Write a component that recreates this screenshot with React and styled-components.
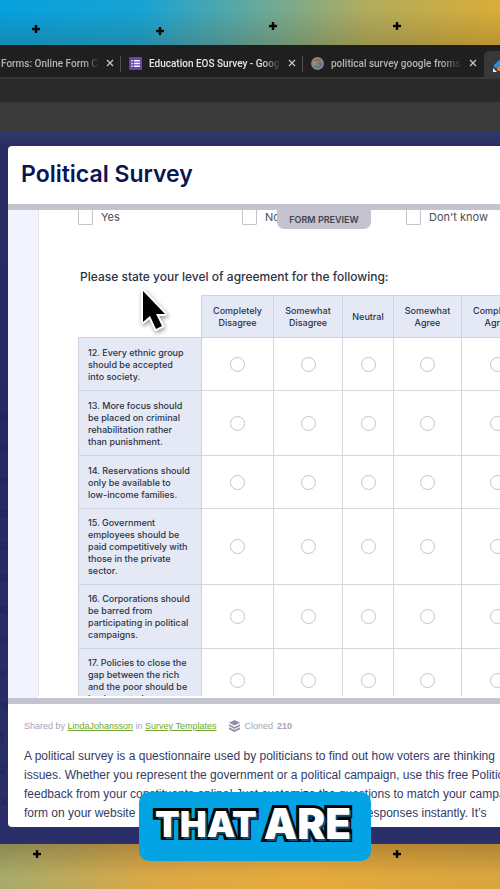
import React from 'react'
import styled, { createGlobalStyle } from 'styled-components';

const columns = ['Completely Disagree', 'Somewhat Disagree', 'Neutral', 'Somewhat Agree', 'Completely Agree'];

const questions = [
  '12. Every ethnic group should be accepted into society.',
  '13. More focus should be placed on criminal rehabilitation rather than punishment.',
  '14. Reservations should only be available to low-income families.',
  '15. Government employees should be paid competitively with those in the private sector.',
  '16. Corporations should be barred from participating in political campaigns.',
  '17. Policies to close the gap between the rich and the poor should be implemented.',
];

const counts = ['95', '74', '10', '02', '23', '02', '82', '50', '9', '14', '1', '2', '3', '29'];

function Plus({ x, y }) {
  return (
    <PlusMark $x={x} $y={y} viewBox="0 0 8 8">
      <path d="M4 0.8v6.4M0.8 4h6.4" stroke="#050505" strokeWidth="2.4" strokeLinecap="round" />
    </PlusMark>
  )
}

function CloseTab() {
  return (
    <CloseButton aria-label="Close tab">
      <svg width="8" height="8" viewBox="0 0 8 8"><path d="M1 1l6 6M7 1l-6 6" stroke="currentColor" strokeWidth="1.2" /></svg>
    </CloseButton>
  )
}

function BrowserTabs() {
  return (
    <TabBar>
      <Tab $width={121}>
        <TabTitle>Forms: Online Form Creator</TabTitle>
        <CloseTab />
      </Tab>
      <Tab $width={182} $bright>
        <svg width="13" height="13" viewBox="0 0 12 12">
          <rect width="12" height="12" rx="1" fill="#6a42b4" />
          <path d="M4.5 3.5H10M4.5 6H10M4.5 8.5H10" stroke="#fff" strokeWidth="1.3" />
          <path d="M2.2 3.5h1.2M2.2 6h1.2M2.2 8.5h1.2" stroke="#fff" strokeWidth="1.3" />
        </svg>
        <TabTitle>Education EOS Survey - Google Forms</TabTitle>
        <CloseTab />
      </Tab>
      <Tab $width={181} $last>
        <svg width="13" height="13" viewBox="0 0 13 13">
          <circle cx="6.5" cy="6.5" r="6.5" fill="#858588" />
          <g fill="none" strokeWidth="1.6">
            <path d="M9 4A3.6 3.6 0 0 0 3.4 4.7" stroke="#b5534d" />
            <path d="M3.4 4.7A3.6 3.6 0 0 0 3.4 8.3" stroke="#b3994e" />
            <path d="M3.4 8.3A3.6 3.6 0 0 0 8.8 9.3" stroke="#4c8a5c" />
            <path d="M8.8 9.3A3.6 3.6 0 0 0 10.1 6.6H6.7" stroke="#4e6fa6" />
          </g>
        </svg>
        <TabTitle>political survey google froms template</TabTitle>
        <CloseTab />
      </Tab>
      <ActiveTab>
        <svg width="16" height="14" viewBox="0 0 16 14">
          <path d="M3 6l4-4" stroke="#2f8ede" strokeWidth="4" strokeLinecap="round" />
          <path d="M6 9l5-5" stroke="#f07832" strokeWidth="4" strokeLinecap="round" />
          <path d="M11 11l3-3" stroke="#f5b52e" strokeWidth="4" strokeLinecap="round" />
          <path d="M0 8v4h4z" fill="#eee" />
        </svg>
      </ActiveTab>
    </TabBar>
  )
}

function SurveyForm() {
  return (
    <Preview>
      <Badge>FORM PREVIEW</Badge>
      <Sheet>
        <Options>
          {['Yes', 'No', "Don't know"].map((o) => (
            <Option key={o}><input type="checkbox" />{o}</Option>
          ))}
        </Options>
        <Question>Please state your level of agreement for the following:</Question>
        <Matrix>
          <colgroup>
            <Col $w={123} /><Col $w={72} /><Col $w={69} /><Col $w={51} /><Col $w={68} /><Col $w={72} />
          </colgroup>
          <thead>
            <tr>
              <td />
              {columns.map((c) => <th key={c} scope="col">{c}</th>)}
            </tr>
          </thead>
          <tbody>
            {questions.map((q, i) => (
              <tr key={q}>
                <th scope="row">{q}</th>
                {columns.map((c) => (
                  <td key={c}><Radio type="radio" name={`q${i}`} aria-label={c} /></td>
                ))}
              </tr>
            ))}
          </tbody>
        </Matrix>
      </Sheet>
    </Preview>
  )
}

function App() {
  return (
    <Page>
      <GlobalStyle />
      <Banner>
        <Plus x={36} y={29} />
        <Plus x={160} y={31} />
        <Plus x={273} y={26} />
        <Plus x={397} y={26} />
      </Banner>
      <BrowserTabs />
      <AddressBar />
      <BookmarkBar />
      <Site>
        <Sidebar>{counts.map((c, i) => <span key={i}>{c}</span>)}</Sidebar>
        <Modal>
          <Title>Political Survey</Title>
          <SurveyForm />
          <Details>
            <Meta>
              <span>Shared by <a href="#user">LindaJohansson</a> in <a href="#templates">Survey Templates</a></span>
              <Cloned>
                <svg width="11" height="12" viewBox="0 0 11 12">
                  <path d="M5.5 0L11 2.8 5.5 5.6 0 2.8z" fill="#8e91a6" />
                  <path d="M0 4.2l5.5 2.8L11 4.2v1.9L5.5 8.9 0 6.1z" fill="#8e91a6" />
                  <path d="M0 7.3l5.5 2.8L11 7.3v1.9L5.5 12 0 9.2z" fill="#8e91a6" />
                </svg>
                Cloned <b>210</b>
              </Cloned>
            </Meta>
            <Description>
              A political survey is a questionnaire used by politicians to find out how voters are thinking<br />
              issues. Whether you represent the government or a political campaign, use this free Political<br />
              feedback from your constituents online! Just customize the questions to match your campaign<br />
              form on your website or share it with your link and easily collect responses instantly. It’s<br />
              and highlight the issues that matter most to your constituents, all in one place
            </Description>
          </Details>
        </Modal>
      </Site>
      <Banner $bottom>
        <Plus x={37} y={10} />
        <Plus x={397} y={10} />
      </Banner>
      <Pointer viewBox="0 0 34 50">
        <path d="M5 7v31l7-6 6 13 6-3-6-12h9z" fill="#000" stroke="#fff" strokeWidth="4" strokeLinejoin="round" paintOrder="stroke" />
      </Pointer>
      <Caption><span>THAT</span><strong>ARE</strong></Caption>
    </Page>
  )
}

const GlobalStyle = createGlobalStyle`
*{
  box-sizing:border-box;
}
body{
  margin:0;
  font-family:Inter, "Liberation Sans", sans-serif;
}
`

const Page = styled.div`
  position:relative;
  display:flex;
  flex-direction:column;
  height:100vh;
  overflow:hidden;
`

const Banner = styled.div`
  position:relative;
  flex:none;
  height:45px;
  background:${(p) => p.$bottom
    ? 'linear-gradient(rgba(70,50,20,.28), transparent 70%), linear-gradient(90deg, #a5ab6c, #dba846 30%, #e6aa3c 60%, #d8a540)'
    : 'linear-gradient(transparent 20%, rgba(60,50,20,.2)), linear-gradient(98deg, #06a1de, #17a3d3 28%, #62a9a0 50%, #b2ac5c 73%, #dcad36)'};
`

const PlusMark = styled.svg`
  position:absolute;
  width:8px;
  height:8px;
  left:${(p) => p.$x - 4}px;
  top:${(p) => p.$y - 4}px;
`

const TabBar = styled.nav`
  display:flex;
  flex:none;
  height:34px;
  background:#1f1f1f;
  border-bottom:2px solid #383838;
  overflow:hidden;
`

const Tab = styled.div`
  display:flex;
  align-items:center;
  flex:none;
  gap:7px;
  width:${(p) => p.$width}px;
  padding:4px 7px 0 ${(p) => (p.$width === 121 ? 1 : 8)}px;
  color:${(p) => (p.$bright ? '#e6e6e6' : '#b4b4b4')};
  font:500 10px Roboto, sans-serif;
  background:${(p) => (p.$last ? 'none' : 'linear-gradient(#505050, #505050) right 11px / 1px 16px no-repeat')};

  svg{
    flex:none;
  }
`

const TabTitle = styled.span`
  flex:1;
  overflow:hidden;
  white-space:nowrap;
  mask-image:linear-gradient(90deg, #000 85%, transparent);
`

const CloseButton = styled.button`
  display:flex;
  padding:0;
  border:0;
  background:none;
  color:#c9c9c9;
`

const ActiveTab = styled.div`
  flex:1;
  margin-top:6px;
  padding:7px 0 0 9px;
  border-radius:5px 0 0 0;
  background:#383838;
`

const AddressBar = styled.div`
  flex:none;
  height:23px;
  background:#2a2a2a;
`

const BookmarkBar = styled.div`
  flex:none;
  height:29px;
  background:#3a3a3a;
`

const Site = styled.main`
  display:flex;
  flex:1;
  min-height:0;
  padding:15px 0 17px;
  background:linear-gradient(#30386c, #2a2d64 15px, #232963 40%, #2a2f69);
`

const Sidebar = styled.aside`
  display:flex;
  flex-direction:column;
  flex:none;
  width:8px;
  padding-top:256px;
  overflow:hidden;
  color:#1d2254;
  font-size:9px;
  line-height:32px;
`

const Modal = styled.section`
  display:flex;
  flex-direction:column;
  flex:1;
  min-width:0;
  overflow:hidden;
  background:#fff;
  border-radius:4px 0 0 4px;
`

const Title = styled.h1`
  flex:none;
  margin:0;
  padding:0 13px;
  color:#0a1551;
  font-size:23px;
  font-weight:600;
  line-height:56px;
  height:58px;
`

const Preview = styled.div`
  position:relative;
  flex:1;
  min-height:0;
  padding:0 0 2px 30px;
  overflow:hidden;
  border-top:6px solid #c3c4cf;
  border-bottom:6px solid #c3c4cf;
  background:linear-gradient(90deg, #f3f3fe 30px, #fff 30px);
`

const Badge = styled.div`
  position:absolute;
  top:0;
  left:269px;
  width:94px;
  border-radius:0 0 7px 7px;
  background:#c3c4cf;
  color:#3f4254;
  font-size:9px;
  font-weight:600;
  line-height:19px;
  text-align:center;
`

const Sheet = styled.form`
  height:100%;
  padding-left:39px;
  overflow:hidden;
  border-left:1px solid #e4e4ee;
`

const Options = styled.div`
  display:grid;
  grid-template-columns:repeat(3, 164px);
  margin-top:-1px;
`

const Option = styled.label`
  display:flex;
  align-items:center;
  gap:8px;
  color:#4b4e5a;
  font-size:11px;
  line-height:16px;

  input{
    appearance:none;
    width:15px;
    height:16px;
    margin:0;
    border:1px solid #c3c3c8;
    border-radius:1px;
  }
`

const Question = styled.p`
  margin:42px 0 8px 2px;
  color:#2c3345;
  font-size:12px;
  font-weight:500;
  line-height:20px;
  white-space:nowrap;
`

const Matrix = styled.table`
  table-layout:fixed;
  width:456px;
  border-collapse:collapse;
  color:#2c3345;
  font-size:9px;
  line-height:12px;

  th{
    padding:9px 11px 7px 9px;
    border:1px solid #cdd4e0;
    background:#e5e9f5;
    font-weight:500;
    text-align:left;
  }

  tr:nth-child(n+4) th{
    padding-top:8px;
  }

  thead tr th{
    height:42px;
    padding:0 8px;
    text-align:center;
  }

  thead tr:first-child th:nth-child(n){
    padding:0 8px;
  }

  td{
    padding:0;
    text-align:center;
  }

  tbody td{
    border:1px solid #d3d7de;
  }
`

const Col = styled.col`
  width:${(p) => p.$w}px;
`

const Radio = styled.input`
  appearance:none;
  display:block;
  width:15px;
  height:15px;
  margin:0 auto;
  border:1px solid #c4c4c6;
  border-radius:50%;
`

const Details = styled.div`
  flex:none;
  height:123px;
  padding:15px 0 0 16px;
  overflow:hidden;
  white-space:nowrap;
  font-family:"Liberation Sans", Arial, sans-serif;
`

const Meta = styled.div`
  display:flex;
  gap:13px;
  color:#a3a5b5;
  font-size:9px;
  line-height:14px;

  a{
    color:#6fa82e;
  }
`

const Cloned = styled.span`
  display:flex;
  align-items:center;
  gap:4px;
`

const Description = styled.p`
  margin:14px 0 0;
  color:#343a66;
  font-size:12px;
  line-height:19px;
`

const Pointer = styled.svg`
  position:absolute;
  top:284px;
  left:138px;
  width:34px;
  height:50px;
  filter:drop-shadow(1px 2px 2px rgba(0,0,0,.4));
`

const Caption = styled.div`
  position:absolute;
  left:139px;
  bottom:28px;
  display:flex;
  align-items:center;
  justify-content:center;
  gap:7px;
  width:232px;
  height:69px;
  padding:0 4px 6px 0;
  border-radius:10px;
  background:#04a3e4;
  color:#fff;
  font-size:36px;
  font-weight:900;
  -webkit-text-stroke:6px #050505;
  paint-order:stroke fill;
  text-shadow:2px 2px 0 #0b4f70;

  strong{
    font-size:42px;
    font-weight:900;
  }
`

export default App;
